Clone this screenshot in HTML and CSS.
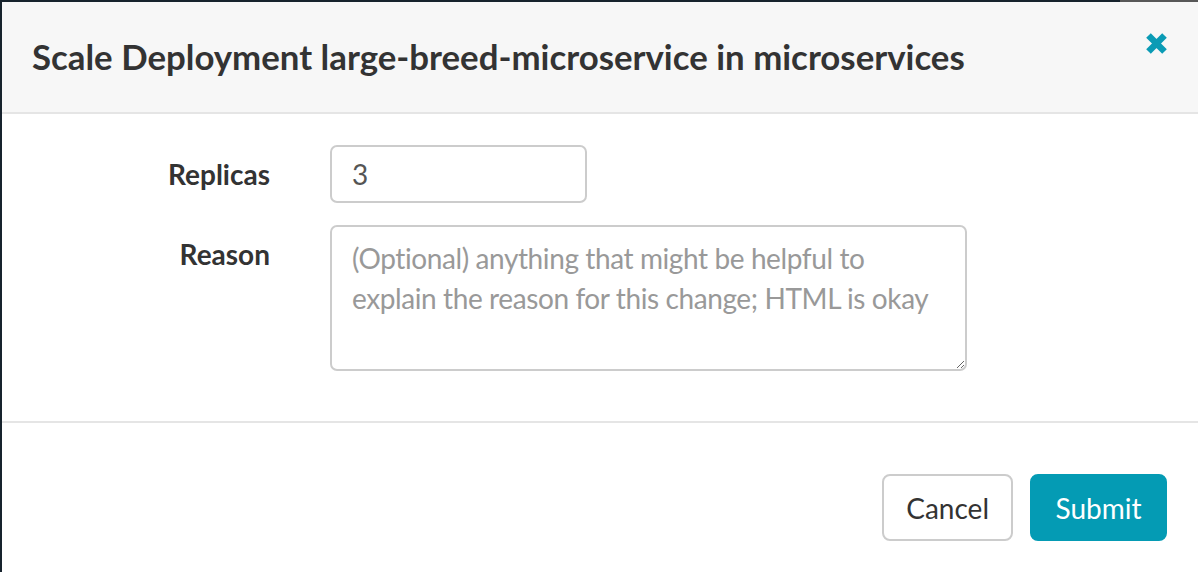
FILE: index.html
```html
<!DOCTYPE html>
<html lang="en">
<head>
<meta charset="utf-8">
<title>Scale Deployment</title>
<link rel="stylesheet" href="styles.css">
</head>
<body>
<div class="modal">
  <div class="modal-header">
    <h4 class="modal-title">Scale Deployment large-breed-microservice in microservices</h4>
    <button class="close" type="button" aria-label="Close">
      <svg width="23" height="23" viewBox="0 0 23 23" aria-hidden="true">
        <path d="M3.5 3.5 L19.5 19.5 M19.5 3.5 L3.5 19.5" stroke="#0a9bb5" stroke-width="6.5" stroke-linecap="butt"/>
      </svg>
    </button>
  </div>
  <form class="modal-body">
    <div class="form-row">
      <label class="form-label" for="replicas">Replicas</label>
      <div class="control"><input id="replicas" class="input input-short" type="text" value="3"></div>
    </div>
    <div class="form-row">
      <label class="form-label" for="reason">Reason</label>
      <div class="control"><textarea id="reason" class="input textarea" placeholder="(Optional) anything that might be helpful to explain the reason for this change; HTML is okay"></textarea></div>
    </div>
  </form>
  <div class="modal-footer">
    <button class="btn btn-default" type="button">Cancel</button>
    <button class="btn btn-primary" type="button">Submit</button>
  </div>
</div>
</body>
</html>
```
FILE: styles.css
```css
* { box-sizing: border-box; }
html, body { height: 100%; }
body {
  margin: 0;
  background: linear-gradient(to right, #17232d 0, #17232d 1120px, #585858 1120px);
  font-family: "Lato", "Open Sans", sans-serif;
  color: #333;
  overflow: hidden;
}
.modal {
  margin: 2px 0 0 2px;
  background: #fff;
  min-height: 570px;
}
.modal-header {
  height: 112px;
  background: #f7f7f7;
  border-bottom: 2px solid #e5e5e5;
  padding: 0 30px;
  display: flex;
  justify-content: space-between;
  align-items: center;
}
.modal-title {
  margin: 0;
  font-size: 34.8px;
  font-weight: 700;
  color: #333;
  line-height: 40px;
}
.close {
  align-self: flex-start;
  margin-top: 30px;
  padding: 0;
  border: 0;
  background: none;
  width: 23px;
  height: 23px;
  display: block;
}
.close svg { display: block; }
.modal-body {
  margin: 0;
  padding: 31px 30px 50px;
  border-bottom: 2px solid #e5e5e5;
  display: flex;
  flex-direction: column;
  gap: 22px;
}
.form-row {
  display: grid;
  grid-template-columns: 238px 637px;
  column-gap: 60px;
  align-items: start;
}
.form-label {
  text-align: right;
  font-weight: 700;
  font-size: 28px;
  line-height: 40px;
  padding-top: 9px;
}
.input {
  display: block;
  font-family: "Lato", "Open Sans", sans-serif;
  font-size: 28px;
  line-height: 40px;
  color: #555;
  border: 2px solid #ccc;
  border-radius: 7px;
  background: #fff;
  padding: 7px 20px;
  outline: none;
  margin: 0;
}
.input-short {
  width: 257px;
  height: 58px;
}
.textarea {
  width: 637px;
  height: 146px;
  padding-top: 11px;
  letter-spacing: -0.4px;
  resize: vertical;
}
.textarea::placeholder { color: #999; opacity: 1; }
.modal-footer {
  padding: 51px 31px 0 0;
  display: flex;
  justify-content: flex-end;
  gap: 17px;
}
.btn {
  height: 67px;
  font-family: "Lato", "Open Sans", sans-serif;
  font-size: 28px;
  line-height: 40px;
  padding: 0 22px;
  border-radius: 8px;
  cursor: pointer;
}
.btn-default {
  background: #fff;
  border: 2px solid #ccc;
  color: #333;
}
.btn-primary {
  background: #049bb4;
  border: 2px solid #049bb4;
  color: #fff;
  padding: 0 23.5px;
}
```
